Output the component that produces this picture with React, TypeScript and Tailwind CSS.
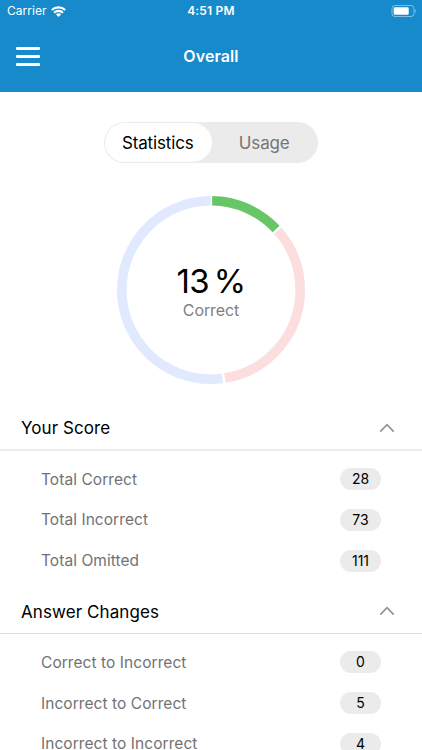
import React, { useState } from 'react';

interface StatRow {
  label: string;
  value: number;
}

interface SectionProps {
  title: string;
  rows: StatRow[];
  dividerClass: string;
}

const scoreRows: StatRow[] = [
  { label: 'Total Correct', value: 28 },
  { label: 'Total Incorrect', value: 73 },
  { label: 'Total Omitted', value: 111 },
];

const changeRows: StatRow[] = [
  { label: 'Correct to Incorrect', value: 0 },
  { label: 'Incorrect to Correct', value: 5 },
  { label: 'Incorrect to Incorrect', value: 4 },
];

const StatusBar: React.FC = () => (
  <div className="grid h-[22px] grid-cols-3 items-center pl-[6px] pr-[6px] text-white">
    <div className="flex items-center gap-[4px] pl-px">
      <span className="text-[12px] leading-none tracking-[0.05px]">Carrier</span>
      <svg width="15" height="11" viewBox="0 0 15 11" fill="none" stroke="white" strokeWidth="2.1">
        <path d="M0.8 4.1a9.5 9.5 0 0 1 13.4 0" />
        <path d="M3.1 6.7a6.2 6.2 0 0 1 8.8 0" />
        <path d="M7.5 11L5 8.5a3.6 3.6 0 0 1 5 0z" fill="white" stroke="none" />
      </svg>
    </div>
    <span className="text-center text-[12px] font-semibold leading-none tracking-[0.2px]">4:51 PM</span>
    <svg className="-mr-px justify-self-end" width="26" height="12" viewBox="0 0 26 12">
      <rect x="1" y="0.5" width="22" height="11" rx="3" fill="none" stroke="white" strokeOpacity="0.45" />
      <rect x="2.7" y="2.3" width="15" height="7.4" rx="1.3" fill="white" />
      <path d="M24.3 4.2v3.6c1.2-.5 1.2-3.1 0-3.6z" fill="white" fillOpacity="0.5" />
    </svg>
  </div>
);

const Donut: React.FC = () => {
  const center = 94;
  const radius = 89.2;
  const total = 212;
  const segments = [
    { value: 28, color: '#67c667' },
    { value: 73, color: '#fcdede' },
    { value: 111, color: '#e0e9fd' },
  ];
  const length = 2 * Math.PI * radius;
  const gap = 2.4;
  let start = 0;

  return (
    <svg className="col-start-1 row-start-1" width="188" height="188" viewBox="0 0 188 188">
      {segments.map((segment) => {
        const size = (segment.value / total) * length;
        const offset = -(start + gap / 2);
        start += size;
        return (
          <circle
            key={segment.color}
            cx={center}
            cy={center}
            r={radius}
            fill="none"
            stroke={segment.color}
            strokeWidth={9.6}
            strokeDasharray={`${size - gap} ${length}`}
            strokeDashoffset={offset}
            transform={`rotate(-90 ${center} ${center})`}
          />
        );
      })}
    </svg>
  );
};

const Section: React.FC<SectionProps> = ({ title, rows, dividerClass }) => {
  const [isOpen, setIsOpen] = useState<boolean>(true);

  return (
    <section className="h-[183.5px] shrink-0">
      <button
        className={`flex w-full items-center justify-between pl-[21px] pr-[27px] ${dividerClass}`}
        onClick={() => setIsOpen(!isOpen)}
        aria-expanded={isOpen}
      >
        <span className="pt-px text-[17px] leading-6 tracking-[0.08px] text-black">{title}</span>
        <svg
          className={isOpen ? '' : 'rotate-180'}
          width="16"
          height="10"
          viewBox="0 0 16 10"
          fill="none"
          stroke="#929292"
          strokeWidth="1.6"
        >
          <path d="M1.3 8.6L8 1.7l6.7 6.9" />
        </svg>
      </button>
      {isOpen && (
        <ul className="pt-[7.8px]">
          {rows.map((row) => (
            <li key={row.label} className="flex h-[40.8px] items-center justify-between pl-[41px] pr-[41px]">
              <span className="pt-px text-[15.5px] leading-6 tracking-[0.06px] text-[#727274]">{row.label}</span>
              <span className="flex h-[22px] w-[41px] items-center justify-center rounded-full bg-[#ebebeb] text-[14px] leading-none text-black">
                {row.value}
              </span>
            </li>
          ))}
        </ul>
      )}
    </section>
  );
};

const App: React.FC = () => {
  const [tab, setTab] = useState<string>('Statistics');

  return (
    <div className="flex h-[750px] w-[422px] flex-col overflow-hidden bg-white font-['Inter',sans-serif]">
      {/* Header */}
      <header className="h-[92px] shrink-0 bg-[#178acb]">
        <StatusBar />
        <div className="grid h-[69px] grid-cols-[40px_1fr_40px] items-center">
          <button className="ml-4 flex w-6 flex-col gap-[5.4px]" aria-label="Open menu">
            <span className="h-[3px] w-full rounded-[1px] bg-white" />
            <span className="h-[3px] w-full rounded-[1px] bg-white" />
            <span className="h-[3px] w-full rounded-[1px] bg-white" />
          </button>
          <h1 className="pb-[2px] text-center text-[16px] font-semibold tracking-[0.1px] text-white">Overall</h1>
        </div>
      </header>

      {/* Tabs */}
      <div className="mt-[30px] ml-[104px] flex h-[41px] w-[214px] shrink-0 rounded-full bg-[#ebebeb] p-px">
        {['Statistics', 'Usage'].map((name) => (
          <button
            key={name}
            onClick={() => setTab(name)}
            className={`flex-1 rounded-full pt-[2px] text-[17px] tracking-[-0.15px] ${tab === name ? 'bg-white pr-px text-black' : 'text-[#757577]'}`}
          >
            {name}
          </button>
        ))}
      </div>

      {/* Score chart */}
      <div className="mt-[33px] ml-[117px] grid h-[188px] w-[188px] shrink-0 place-items-center">
        <Donut />
        <div className="col-start-1 row-start-1 flex flex-col items-center">
          <span className="pt-[2px] text-[33px] leading-[38px] tracking-[-0.6px] [word-spacing:-4px] text-black">13 %</span>
          <span className="text-[16px] leading-5 tracking-[-0.1px] text-[#808080]">Correct</span>
        </div>
      </div>

      <div className="mt-[22px]">
        <Section title="Your Score" rows={scoreRows} dividerClass="h-[45px] border-b-2 border-[#ebebeb]" />
        <Section title="Answer Changes" rows={changeRows} dividerClass="h-[44.6px] border-b border-[#dedede]" />
      </div>
    </div>
  );
};

export default App;
